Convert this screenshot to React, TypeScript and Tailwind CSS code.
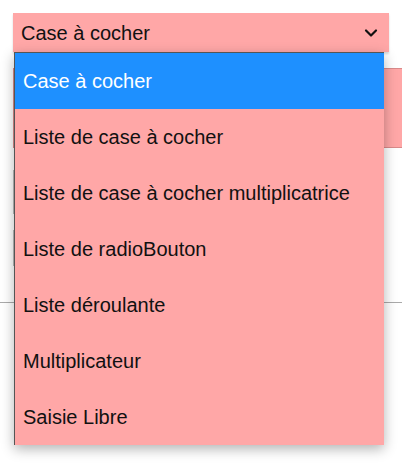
import { ChevronDown } from "lucide-react"

const options = [
  "Case à cocher",
  "Liste de case à cocher",
  "Liste de case à cocher multiplicatrice",
  "Liste de radioBouton",
  "Liste déroulante",
  "Multiplicateur",
  "Saisie Libre",
]

export default function App() {
  return (
    <div className="relative h-[464px] w-[402px] overflow-hidden bg-white font-['Liberation_Sans',Arial,sans-serif] text-[20px] text-[#111]">
      {/* page behind the open list */}
      <div className="pt-[13px]">
        <div className="mx-[13px] flex h-[39px] items-center justify-between bg-[#ffa7a7] pl-2 pr-2 shadow-[0_2px_2px_rgba(0,0,0,0.15)]">
          <span>Case à cocher</span>
          <ChevronDown className="h-5 w-5" strokeWidth={2.6} />
        </div>
        <div className="ml-[13px] mt-[16px] h-[80px] border-y border-l border-[#d98a8a] bg-[#ffa7a7]" />
        <div className="ml-[13px] mt-[22px] h-[44px] border-l border-[#bbb]" />
        <div className="ml-[13px] mt-[16px] h-[36px] border-l border-[#bbb]" />
        <div className="mt-[36px] border-t border-[#aaa]" />
      </div>

      {/* open listbox */}
      <ul className="absolute left-[14px] top-[52px] w-[370px] border-l border-t border-[#555] bg-[#ffa7a7] shadow-[0_4px_12px_rgba(0,0,0,0.3)]">
        {options.map((opt, i) => (
          <li
            key={opt}
            className={
              i === 0
                ? "flex h-[56px] items-center bg-[#1e90ff] pl-2 text-white"
                : "flex h-[56px] items-center pl-2"
            }
          >
            {opt}
          </li>
        ))}
      </ul>
    </div>
  )
}
